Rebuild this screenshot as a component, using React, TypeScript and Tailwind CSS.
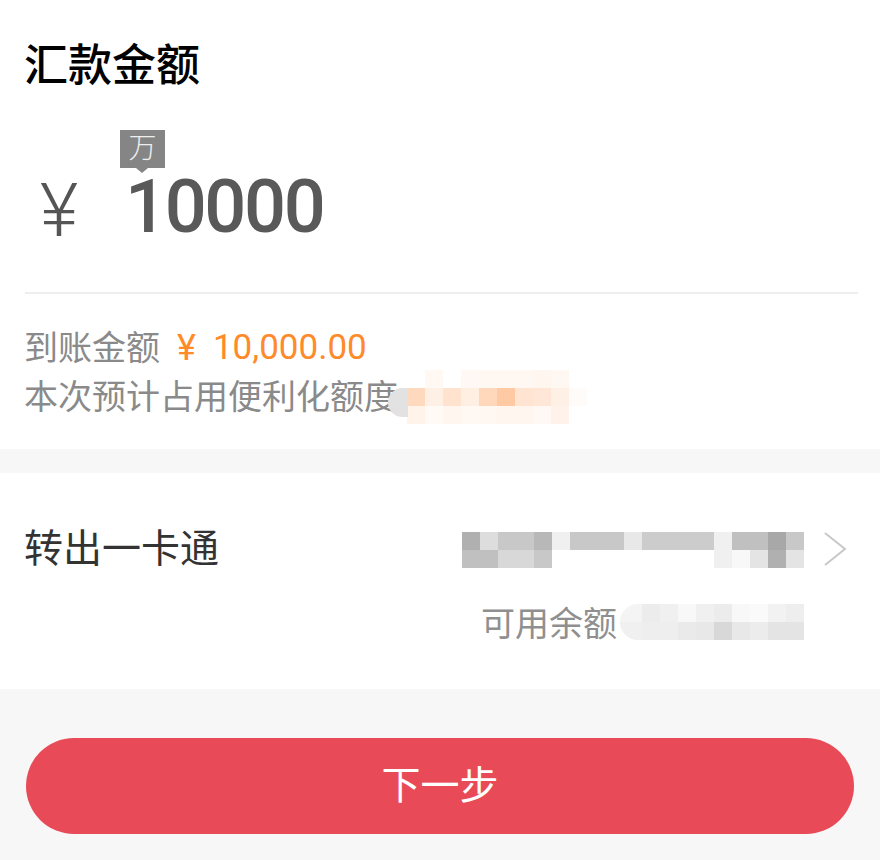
import React from 'react';

const cjk = "font-['Roboto','Noto_Sans_CJK_SC',sans-serif]";

// blurred-out account details in the screenshot
const Mosaic = ({ rows, className }: { rows: string[][]; className: string }) => (
  <div className={`absolute flex flex-col overflow-hidden ${className}`}>
    {rows.map((row, i) => (
      <div key={i} className="flex justify-end">
        {row.map((color, j) => (
          <div key={j} className="h-[18px] w-[18px] shrink-0" style={{ backgroundColor: color }} />
        ))}
      </div>
    ))}
  </div>
);

const quotaRows = [
  ['#ffffff', '#fff8f3', '#ffffff', '#fff8f4', '#fff7f2', '#fff7f2', '#fff7f2', '#fff6f0', '#fff7f2', '#ffffff'],
  ['#ffd9bd', '#fff0e6', '#ffe3cf', '#ffeee2', '#ffd8bb', '#ffc9a3', '#ffe4d1', '#ffe6d6', '#fff0e6', '#fffbf8'],
  ['#fff3ea', '#fffaf6', '#fff6f0', '#fff8f3', '#fff7f1', '#fff6ef', '#fff6ef', '#fff8f4', '#fff2ea', '#ffffff'],
];

const cardRows = [
  ['#b0b0b0', '#dddddd', '#c8c8c8', '#c8c8c8', '#b8b8b8', '#f0f0f0', '#c8c8c8', '#c8c8c8', '#c8c8c8', '#e8e8e8', '#cccccc', '#cccccc', '#cccccc', '#cccccc', '#f0f0f0', '#c0c0c0', '#c0c0c0', '#a8a8a8', '#c8c8c8'],
  ['#c0c0c0', '#c0c0c0', '#d8d8d8', '#d8d8d8', '#c8c8c8', '#ffffff', '#ffffff', '#ffffff', '#ffffff', '#ffffff', '#ffffff', '#ffffff', '#ffffff', '#ffffff', '#f0f0f0', '#f8f8f8', '#e4e4e4', '#b0b0b0', '#e4e4e4'],
];

const balanceRows = [
  ['#f4f4f4', '#f4f4f4', '#ececec', '#f0f0f0', '#f8f8f8', '#f0f0f0', '#ececec', '#f8f8f8', '#fafafa', '#f2f2f2', '#eeeeee'],
  ['#f0f0f0', '#f0f0f0', '#eeeeee', '#eeeeee', '#eaeaea', '#e8e8e8', '#d8d8d8', '#e8e8e8', '#ececec', '#e4e4e4', '#e4e4e4'],
];

export default function App() {
  return (
    <div className={`flex h-[860px] w-[880px] flex-col overflow-hidden bg-[#f7f7f7] ${cjk}`}>
      {/* Amount */}
      <section className="relative flex h-[449px] flex-col bg-white pr-[22px] pl-[25px]">
        <h1 className="mt-[35px] -ml-px text-[44px] leading-[62px] font-medium text-black">汇款金额</h1>

        <div className="relative mt-[33px] flex h-[164px] items-center border-b-2 border-[#eeeeee] pb-[8px]">
          <span className="ml-[15px] w-[42px] pt-[8px] text-[74px] leading-none font-light text-[#555555]">¥</span>
          <span className="ml-[43px] text-[74px] leading-none font-medium tracking-[-2.4px] text-[#595959]">10000</span>
          <div className="absolute top-0 left-[95px] flex h-[38px] w-[45px] items-center justify-center bg-[#858585] text-[28px] leading-none font-light text-[#eeeeee]">
            万
            <div className="absolute top-full left-[16px] h-0 w-0 border-x-[6px] border-t-[5px] border-x-transparent border-t-[#858585]" />
          </div>
        </div>

        <p className="mt-[30px] -ml-px flex items-center text-[34px] leading-[48px] text-[#8a8a8a]">
          到账金额
          <span className="ml-[17px] text-[36px] text-[#ff8a2a]">¥</span>
          <span className="ml-[17px] text-[35px] text-[#ff8a2a]">10,000.00</span>
        </p>
        <p className="-ml-px text-[34px] leading-[50px] text-[#8a8a8a]">本次预计占用便利化额度</p>
        <Mosaic rows={quotaRows} className="top-[370px] left-[407px] rounded-tl-[14px]" />
        <div className="absolute top-[388px] left-[388px] h-[29px] w-[20px] rounded-l-full bg-[#e2e2e2]" />
      </section>

      {/* Card */}
      <section className="relative mt-[24px] h-[216px] bg-white px-[25px]">
        <div className="-ml-px pt-[48px] text-[39px] leading-[56px] text-[#333333]">转出一卡通</div>
        <Mosaic rows={cardRows} className="top-[59px] left-[462px]" />
        <svg className="absolute top-[58px] left-[823px] h-[36px] w-[24px]" viewBox="0 0 24 36" fill="none">
          <path d="M2 2l20 16L2 34" stroke="#c8c8c8" strokeWidth="2" />
        </svg>
        <div className="absolute top-[127px] left-[481px] text-[34px] leading-[48px] text-[#8f8f8f]">可用余额</div>
        <Mosaic rows={balanceRows} className="top-[131px] left-[620px] w-[184px] rounded-l-[18px]" />
      </section>

      {/* Next */}
      <div className="px-[26px] pt-[49px]">
        <button type="button" className="h-[96px] w-full rounded-full bg-[#e84b57] text-[39px] leading-none text-white">
          下一步
        </button>
      </div>
    </div>
  );
}
